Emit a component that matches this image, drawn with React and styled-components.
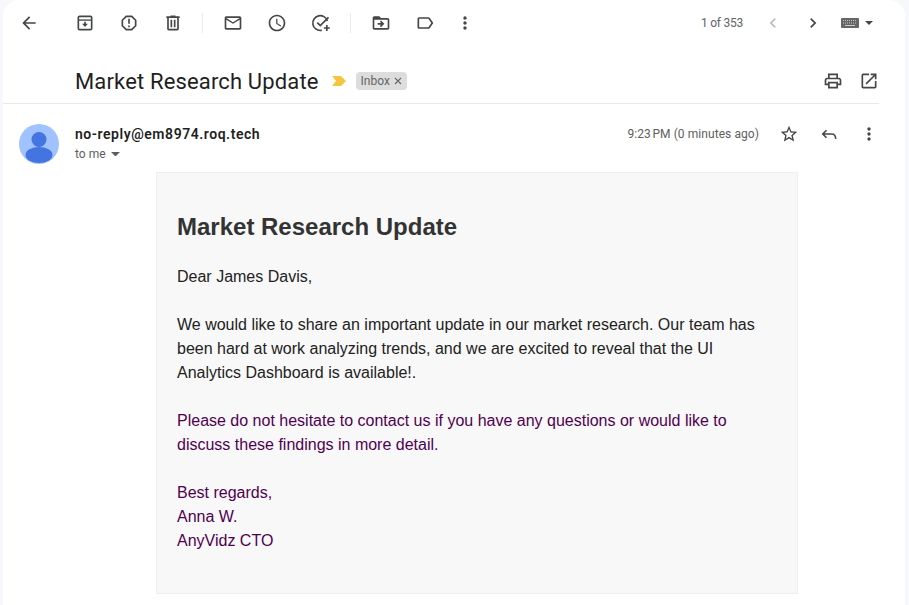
import React from 'react'
import styled, { createGlobalStyle } from 'styled-components'

const GlobalStyle = createGlobalStyle`
html, body {
  margin: 0;
  padding: 0;
  height: 100%;
  overflow: hidden;
  background: #f6f8fc;
}
#root {
  height: 100%;
}
`

const Page = styled.div`
height: 100%;
padding: 0 4px 0 3px;
box-sizing: border-box;
font-family: Roboto, "Liberation Sans", sans-serif;
`

const Pane = styled.main`
height: 100%;
background: #fff;
border-radius: 16px 16px 0 0;
padding-right: 26px;
`

const Toolbar = styled.div`
display: flex;
align-items: center;
height: 46px;
padding-left: 4px;
margin-right: -26px;
`

const Slot = styled.div`
display: flex;
align-items: center;
justify-content: center;
flex: none;
width: ${({ w }) => w || 44}px;
height: 20px;
margin-right: ${({ mr }) => mr || 0}px;
color: ${({ faded }) => faded ? '#bdbdbd' : '#444746'};
`

const Divider = styled.div`
flex: none;
width: 1px;
height: 20px;
margin: 0 8px 0 7px;
background: #e8eaed;
`

const Pager = styled.div`
display: flex;
align-items: center;
margin-left: auto;
padding-right: 32px;
`

const Count = styled.span`
font-size: 12px;
letter-spacing: -0.25px;
color: #5f6368;
margin-right: 10px;
`

const Keyboard = styled.div`
display: flex;
align-items: center;
gap: 6px;
margin-left: 8px;
`

const SubjectRow = styled.div`
display: flex;
align-items: center;
height: 44px;
padding: 13px 0 0 72px;
border-bottom: 1px solid #e9eaec;
`

const Subject = styled.h1`
margin: 0;
font-family: Roboto, sans-serif;
font-size: 22px;
font-weight: 400;
letter-spacing: 0.15px;
color: #1f1f1f;
`

const Chip = styled.span`
display: inline-flex;
align-items: center;
gap: 4px;
height: 18px;
margin-left: 10px;
padding: 0 5px;
border-radius: 4px;
background: #dddddd;
font-size: 12px;
color: #666;
`

const SubjectTools = styled.div`
display: flex;
gap: 16px;
margin-left: auto;
color: #444746;
`

const MessageHead = styled.div`
display: flex;
align-items: flex-start;
padding: 20px 0 0 16px;
`

const Avatar = styled.svg`
flex: none;
width: 40px;
height: 40px;
margin-right: 16px;
`

const Sender = styled.div`
font-size: 14px;
line-height: 20px;
font-weight: 600;
letter-spacing: 0.55px;
color: #1f1f1f;
`

const Recipient = styled.div`
display: flex;
align-items: center;
gap: 5px;
font-size: 12px;
line-height: 20px;
color: #5e5e5e;
`

const MessageTools = styled.div`
display: flex;
align-items: center;
gap: 20px;
height: 20px;
margin-left: auto;
color: #444746;
`

const Time = styled.span`
font-size: 12px;
letter-spacing: 0.07px;
color: #5e5e5e;
`

const Card = styled.article`
box-sizing: border-box;
width: 642px;
height: 422px;
margin: 8px 0 0 153px;
padding: 39px 20px 0;
background: #f8f8f8;
border: 1px solid #eeeeee;
font-family: "Liberation Sans", Arial, sans-serif;
font-size: 16px;
line-height: 24px;
color: #222;
`

const Heading = styled.h2`
margin: 0 0 23px;
font-size: 24px;
line-height: 30px;
font-weight: 700;
color: #333;
`

const Para = styled.p`
margin: 0 0 24px;
color: ${({ quoted }) => quoted ? '#500050' : '#222'};
`

const Marker = styled.svg`
flex: none;
margin-left: 13px;
`

const Icon = ({ d, size = 20, fill = 'currentColor', children }) => (
  <svg width={size} height={size} viewBox='0 0 24 24' fill={fill} aria-hidden='true'>
    {d && <path d={d} />}
    {children}
  </svg>
)

const paths = {
  back: 'M20 11H7.83l5.59-5.59L12 4l-8 8 8 8 1.41-1.41L7.83 13H20v-2z',
  report: 'M15.73 3H8.27L3 8.27v7.46L8.27 21h7.46L21 15.73V8.27L15.73 3zM19 14.9L14.9 19H9.1L5 14.9V9.1L9.1 5h5.8L19 9.1v5.8zM11 15h2v2h-2zm0-8h2v6h-2z',
  trash: 'M15 4V3H9v1H4v2h1v13c0 1.1.9 2 2 2h10c1.1 0 2-.9 2-2V6h1V4h-5zm2 15H7V6h10v13zM9 8h2v9H9zm4 0h2v9h-2z',
  mail: 'M20 4H4c-1.1 0-2 .9-2 2v12c0 1.1.9 2 2 2h16c1.1 0 2-.9 2-2V6c0-1.1-.9-2-2-2zm0 14H4V8l8 5 8-5v10zm-8-7L4 6h16l-8 5z',
  clock: 'M11.99 2C6.47 2 2 6.48 2 12s4.47 10 9.99 10C17.52 22 22 17.52 22 12S17.52 2 11.99 2zM12 20c-4.42 0-8-3.58-8-8s3.58-8 8-8 8 3.58 8 8-3.58 8-8 8zm.5-13H11v6l5.25 3.15.75-1.23-4.5-2.67z',
  folder: 'M20 6h-8l-2-2H4c-1.1 0-2 .9-2 2v12c0 1.1.9 2 2 2h16c1.1 0 2-.9 2-2V8c0-1.1-.9-2-2-2zm0 12H4V8h16v10zm-8.01-9l-1.41 1.41L12.16 12H8v2h4.16l-1.59 1.59L11.99 17 16 13.01 11.99 9z',
  label: 'M17.63 5.84C17.27 5.33 16.67 5 16 5L5 5.01C3.9 5.01 3 5.9 3 7v10c0 1.1.9 1.99 2 1.99L16 19c.67 0 1.27-.33 1.63-.84L22 12l-4.37-6.16zM16 17H5V7h11l3.55 5L16 17z',
  dots: 'M12 8c1.1 0 2-.9 2-2s-.9-2-2-2-2 .9-2 2 .9 2 2 2zm0 2c-1.1 0-2 .9-2 2s.9 2 2 2 2-.9 2-2-.9-2-2-2zm0 6c-1.1 0-2 .9-2 2s.9 2 2 2 2-.9 2-2-.9-2-2-2z',
  prev: 'M15.41 7.41L14 6l-6 6 6 6 1.41-1.41L10.83 12z',
  next: 'M8.59 16.59L10 18l6-6-6-6-1.41 1.41L13.17 12z',
  print: 'M19 8h-1V3H6v5H5c-1.66 0-3 1.34-3 3v6h4v4h12v-4h4v-6c0-1.66-1.34-3-3-3zM8 5h8v3H8V5zm8 14H8v-4h8v4zm2-4v-2H6v2H4v-4c0-.55.45-1 1-1h14c.55 0 1 .45 1 1v4h-2z',
  open: 'M19 19H5V5h7V3H5c-1.11 0-2 .9-2 2v14c0 1.1.89 2 2 2h14c1.1 0 2-.9 2-2v-7h-2v7zM14 3v2h3.59l-9.83 9.83 1.41 1.41L19 6.41V10h2V3h-7z',
  star: 'M22 9.24l-7.19-.62L12 2 9.19 8.63 2 9.24l5.46 4.73L5.82 21 12 17.27 18.18 21l-1.63-7.03L22 9.24zM12 15.4l-3.76 2.27 1-4.28-3.32-2.88 4.38-.38L12 6.1l1.71 4.04 4.38.38-3.32 2.88 1 4.28L12 15.4z'
}

const ArchiveIcon = () => (
  <Icon>
    <rect x='4' y='4' width='16' height='16' rx='1.5' fill='none' stroke='currentColor' strokeWidth='2' />
    <path d='M4 8.5h16' stroke='currentColor' strokeWidth='1.6' />
    <path d='M11 10.5h2V13h2.5L12 16.8 8.5 13H11z' />
  </Icon>
)

const AddTaskIcon = () => (
  <Icon fill='none'>
    <path d='M19.6 9.5A8.9 8.9 0 1 0 12 20.9h1' stroke='currentColor' strokeWidth='2' />
    <path d='M7.5 11.5l3.6 3.6L21 5.3' stroke='currentColor' strokeWidth='2' />
    <path d='M19 14.5v7M15.5 18h7' stroke='currentColor' strokeWidth='2' />
  </Icon>
)

const ReplyIcon = () => (
  <Icon fill='none'>
    <path d='M9 7.5L4.5 12 9 16.5M4.5 12H15c3 0 5 2 5 6' stroke='currentColor' strokeWidth='1.9' />
  </Icon>
)

const ImportanceMarker = () => (
  <Marker width='14' height='10' viewBox='0 0 14 10' aria-hidden='true'>
    <path d='M0 0h9l5 5-5 5H0l4-5z' fill='#f4c542' />
  </Marker>
)

const KeyboardIcon = () => (
  <svg width='18' height='10' viewBox='0 0 18 10' aria-hidden='true'>
    <rect width='18' height='10' rx='1' fill='#666' />
    <path d='M2 2.5h14M2 5h14' stroke='#c4c4c4' strokeWidth='1' strokeDasharray='1 1' />
    <path d='M4 7.5h10' stroke='#ccc' strokeWidth='1' />
  </svg>
)

const Caret = ({ w = 8, color = '#444746' }) => (
  <svg width={w} height={w / 2} viewBox='0 0 8 4' aria-hidden='true'>
    <path d='M0 0h8L4 4z' fill={color} />
  </svg>
)

const CloseX = () => (
  <svg width='8' height='8' viewBox='0 0 8 8' aria-hidden='true'>
    <path d='M1 1l6 6M7 1L1 7' stroke='#666' strokeWidth='1.1' fill='none' />
  </svg>
)

export default function App () {
  return (
    <Page>
      <GlobalStyle />
      <Pane>
        <Toolbar>
          <Slot mr={12}><Icon d={paths.back} /></Slot>
          <Slot><ArchiveIcon /></Slot>
          <Slot><Icon d={paths.report} /></Slot>
          <Slot><Icon d={paths.trash} /></Slot>
          <Divider />
          <Slot><Icon d={paths.mail} /></Slot>
          <Slot><Icon d={paths.clock} /></Slot>
          <Slot><AddTaskIcon /></Slot>
          <Divider />
          <Slot><Icon d={paths.folder} /></Slot>
          <Slot><Icon d={paths.label} /></Slot>
          <Slot w={36}><Icon d={paths.dots} /></Slot>
          <Pager>
            <Count>1 of 353</Count>
            <Slot w={40} faded><Icon d={paths.prev} /></Slot>
            <Slot w={40}><Icon d={paths.next} /></Slot>
            <Keyboard>
              <KeyboardIcon />
              <Caret />
            </Keyboard>
          </Pager>
        </Toolbar>
        <SubjectRow>
          <Subject>Market Research Update</Subject>
          <ImportanceMarker />
          <Chip>Inbox <CloseX /></Chip>
          <SubjectTools>
            <Icon d={paths.print} />
            <Icon d={paths.open} />
          </SubjectTools>
        </SubjectRow>
        <MessageHead>
          <Avatar viewBox='0 0 40 40' aria-hidden='true'>
            <clipPath id='avatarClip'><circle cx='20' cy='20' r='20' /></clipPath>
            <circle cx='20' cy='20' r='20' fill='#a0c3ff' />
            <g clipPath='url(#avatarClip)' fill='#4374e0'>
              <circle cx='20' cy='15.5' r='7.5' />
              <ellipse cx='20' cy='31' rx='13.5' ry='8' />
            </g>
          </Avatar>
          <div>
            <Sender>no-reply@em8974.roq.tech</Sender>
            <Recipient>to me <Caret w={9} color='#5e5e5e' /></Recipient>
          </div>
          <MessageTools>
            <Time>9:23{'\u202f'}PM (0 minutes ago)</Time>
            <Icon d={paths.star} />
            <ReplyIcon />
            <Icon d={paths.dots} />
          </MessageTools>
        </MessageHead>
        <Card>
          <Heading>Market Research Update</Heading>
          <Para>Dear James Davis,</Para>
          <Para>We would like to share an important update in our market research. Our team has been hard at work analyzing trends, and we are excited to reveal that the UI Analytics Dashboard is available!.</Para>
          <Para quoted>Please do not hesitate to contact us if you have any questions or would like to discuss these findings in more detail.</Para>
          <Para quoted>Best regards,<br />Anna W.<br />AnyVidz CTO</Para>
        </Card>
      </Pane>
    </Page>
  )
}
